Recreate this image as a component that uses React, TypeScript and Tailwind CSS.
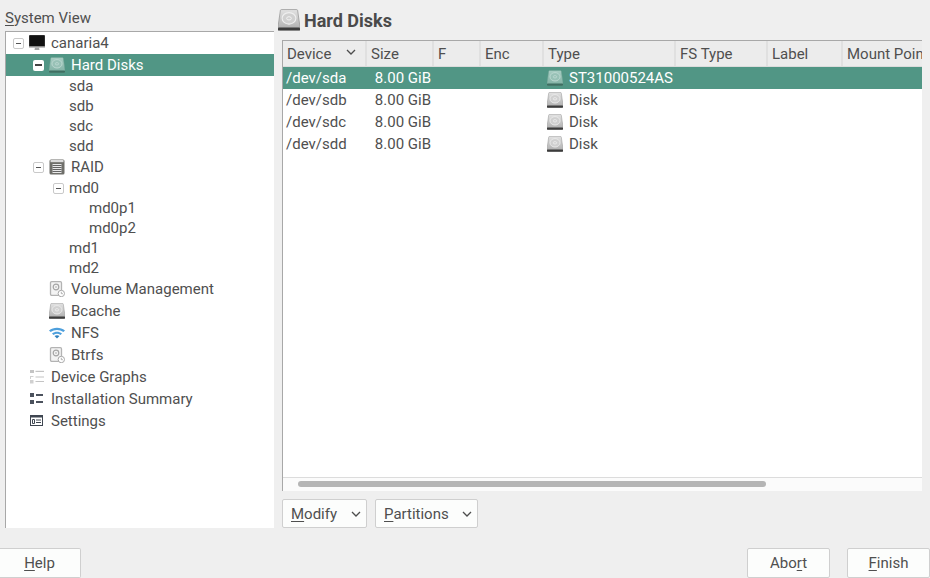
import type { ReactNode } from 'react'

const HddIcon = ({ size = 16, selected = false }: { size?: number; selected?: boolean }) => (
    <svg width={size} height={size} viewBox="0 0 16 16" className="shrink-0">
        <defs>
            <linearGradient id={selected ? 'hddSel' : 'hdd'} x1="0" y1="0" x2="0" y2="1">
                <stop offset="0" stopColor={selected ? '#a9cdc3' : '#e2e2e2'} />
                <stop offset="1" stopColor={selected ? '#80b1a4' : '#adadad'} />
            </linearGradient>
        </defs>
        <path d="M2.600 .4h10.800q.8 0 .9.8L16 13v2.200H0V13L1.700 1.200q.1-.8.9-.8z" fill={`url(#${selected ? 'hddSel' : 'hdd'})`} stroke={selected ? '#6ea193' : '#8f8f8f'} strokeWidth=".5" />
        <ellipse cx="8" cy="6.800" rx="5" ry="4.200" fill={selected ? '#98c1b6' : '#d0d0d0'} stroke={selected ? '#c3dcd5' : '#efefef'} strokeWidth=".8" />
        <ellipse cx="8" cy="6.800" rx="1.700" ry="1.200" fill="none" stroke={selected ? '#c3dcd5' : '#f2f2f2'} strokeWidth=".7" />
        <rect x="0" y="13.400" width="16" height="2.300" rx=".7" fill={selected ? '#3f6f62' : '#3c3c3c'} />
    </svg>
)

const MonitorIcon = () => (
    <svg width="16" height="16" viewBox="0 0 16 16" className="shrink-0">
        <rect x="0" y="0" width="16" height="12" rx="1" fill="#2a2a2a" />
        <rect x="1" y="1" width="14" height="10" fill="#111" />
        <rect x="0" y="11" width="16" height="1.500" fill="#8a8a8a" />
        <path d="M6 12.500h4l.5 2.500h-5z" fill="#a5a5a5" />
    </svg>
)

const RaidIcon = () => (
    <svg width="16" height="16" viewBox="0 0 16 16" className="shrink-0">
        <rect x="0.500" y="0.500" width="15" height="15" rx="1.500" fill="#6f6f6a" />
        <rect x="1.500" y="1" width="13" height="2.200" fill="#dcdcdc" />
        <rect x="3.500" y="5" width="9" height="9" fill="#e9e9e9" />
        <path d="M3.500 6.500h9M3.500 8.500h9M3.500 10.500h9M3.500 12.500h9" stroke="#555" strokeWidth=".9" />
    </svg>
)

const VolumeIcon = () => (
    <svg width="16" height="16" viewBox="0 0 16 16" className="shrink-0">
        <rect x="1.500" y="0.700" width="11" height="13.600" rx="1.200" fill="#f4f4f4" stroke="#b3b3b3" strokeWidth="1.300" />
        <circle cx="7" cy="6" r="2.800" fill="none" stroke="#a5a5a5" strokeWidth="1.200" />
        <circle cx="7" cy="6" r=".8" fill="#a5a5a5" />
        <circle cx="12.300" cy="12.500" r="3.200" fill="#fff" stroke="#a8a8a8" strokeWidth="1" />
        <path d="M12.300 10.800v1.900h1.600" fill="none" stroke="#a8a8a8" strokeWidth=".9" />
    </svg>
)

const WifiIcon = () => (
    <svg width="16" height="16" viewBox="0 0 16 16" className="shrink-0">
        <path d="M0 5.600C4.500 1.900 11.500 1.900 16 5.600l-1.600 1.500C10.600 4.200 5.400 4.200 1.600 7.100z" fill="#4d9fdc" />
        <path d="M3 8.500c3-2.300 7-2.300 10 0l-1.500 1.400c-2.200-1.600-4.800-1.600-7 0z" fill="#4d9fdc" />
        <path d="M5.500 11c1.600-1.100 3.400-1.100 5 0L8 13.500z" fill="#2f80bd" />
    </svg>
)

const GraphsIcon = () => (
    <svg width="16" height="16" viewBox="0 0 16 16" className="shrink-0" fill="#c4c4c4">
        <rect x="1" y="1" width="4" height="3" />
        <rect x="6.500" y="1.800" width="8.500" height="1.200" />
        <path d="M1 7h3.500v1H2v2H1zM1 11h3.500v3.500H1z" opacity=".8" />
        <rect x="6.500" y="7.500" width="8.500" height="1" />
        <rect x="6.500" y="12" width="8.500" height="1" />
    </svg>
)

const SummaryIcon = () => (
    <svg width="16" height="16" viewBox="0 0 16 16" className="shrink-0" fill="#4b525d">
        <rect x="1" y="2" width="4" height="4" />
        <rect x="1" y="9" width="4" height="4" />
        <rect x="7" y="3" width="7" height="2" />
        <rect x="7" y="10" width="7" height="2" />
    </svg>
)

const SettingsIcon = () => (
    <svg width="16" height="16" viewBox="0 0 16 16" className="shrink-0">
        <rect x="1.500" y="2.500" width="12" height="10" fill="#fff" stroke="#3f4651" />
        <rect x="1" y="2" width="13" height="2.500" fill="#3f4651" />
        <path d="M3.500 6.500h2v4h-2zM7 7h5M7 9.500h5" fill="none" stroke="#3f4651" />
    </svg>
)

const Toggle = ({ selected = false }: { selected?: boolean }) => (
    <span
        className={
            selected
                ? 'w-[11px] h-[11px] shrink-0 rounded-[2px] bg-white flex items-center justify-center'
                : 'w-[11px] h-[11px] shrink-0 rounded-[2px] bg-white border border-[#c9c9c9] flex items-center justify-center'
        }
    >
        <span className={selected ? 'w-[7px] h-[2px] bg-[#444]' : 'w-[5px] h-px bg-[#555]'}></span>
    </span>
)

type Node = {
    label: string
    ml: string
    toggle?: boolean
    icon?: 'hdd' | 'hddsel' | 'monitor' | 'raid' | 'volume' | 'wifi' | 'graphs' | 'summary' | 'settings'
}

const tree: Node[] = [
    { label: 'canaria4', ml: 'pl-[7px]', toggle: true, icon: 'monitor' },
    { label: 'Hard Disks', ml: 'pl-[27px]', toggle: true, icon: 'hddsel' },
    { label: 'sda', ml: 'pl-[63px]' },
    { label: 'sdb', ml: 'pl-[63px]' },
    { label: 'sdc', ml: 'pl-[63px]' },
    { label: 'sdd', ml: 'pl-[63px]' },
    { label: 'RAID', ml: 'pl-[27px]', toggle: true, icon: 'raid' },
    { label: 'md0', ml: 'pl-[47px]', toggle: true },
    { label: 'md0p1', ml: 'pl-[83px]' },
    { label: 'md0p2', ml: 'pl-[83px]' },
    { label: 'md1', ml: 'pl-[63px]' },
    { label: 'md2', ml: 'pl-[63px]' },
    { label: 'Volume Management', ml: 'pl-[43px]', icon: 'volume' },
    { label: 'Bcache', ml: 'pl-[43px]', icon: 'hdd' },
    { label: 'NFS', ml: 'pl-[43px]', icon: 'wifi' },
    { label: 'Btrfs', ml: 'pl-[43px]', icon: 'volume' },
    { label: 'Device Graphs', ml: 'pl-[23px]', icon: 'graphs' },
    { label: 'Installation Summary', ml: 'pl-[23px]', icon: 'summary' },
    { label: 'Settings', ml: 'pl-[23px]', icon: 'settings' },
]

const iconFor = (name: Node['icon']): ReactNode => {
    switch (name) {
        case 'hdd':
            return <HddIcon />
        case 'hddsel':
            return <HddIcon selected />
        case 'monitor':
            return <MonitorIcon />
        case 'raid':
            return <RaidIcon />
        case 'volume':
            return <VolumeIcon />
        case 'wifi':
            return <WifiIcon />
        case 'graphs':
            return <GraphsIcon />
        case 'summary':
            return <SummaryIcon />
        case 'settings':
            return <SettingsIcon />
        default:
            return null
    }
}

const TreeRow = ({ node }: { node: Node }) => {
    const selected = node.icon === 'hddsel'
    const height = node.icon ? 'h-[22px]' : 'h-[20px]'
    return (
        <div className={`${height} ${node.ml} flex items-center ${selected ? 'bg-[#519685] text-white' : ''}`}>
            {node.toggle && <Toggle selected={selected} />}
            {node.toggle && <span className="w-[5px] shrink-0"></span>}
            {iconFor(node.icon)}
            {node.icon && <span className="w-[6px] shrink-0"></span>}
            <span className="whitespace-nowrap pt-px">{node.label}</span>
        </div>
    )
}

const columns = 'grid grid-cols-[84px_67px_47px_63px_132px_92px_75px_79px]'
const headers = ['Device', 'Size', 'F', 'Enc', 'Type', 'FS Type', 'Label', 'Mount Point']
const disks = [
    { dev: '/dev/sda', type: 'ST31000524AS' },
    { dev: '/dev/sdb', type: 'Disk' },
    { dev: '/dev/sdc', type: 'Disk' },
    { dev: '/dev/sdd', type: 'Disk' },
]

const Chevron = () => (
    <svg width="10" height="6" viewBox="0 0 10 6" className="shrink-0">
        <path d="M1 1l4 4 4-4" fill="none" stroke="#4d4d4d" strokeWidth="1.300" />
    </svg>
)

const Dropdown = ({ first, rest, width }: { first: string; rest: string; width: string }) => (
    <button type="button" className={`${width} h-[29px] pl-[8px] pr-[5px] flex items-center justify-between bg-[#fcfdfc] border border-[#cfcfcf] rounded-[2px]`}>
        <span className="pt-px">
            <span className="underline underline-offset-2">{first}</span>
            {rest}
        </span>
        <Chevron />
    </button>
)

export default function App() {
    return (
        <main className="h-[578px] w-[930px] overflow-hidden flex flex-col bg-[#efefef] text-[#4f4f4f] text-[15px] font-['Roboto',sans-serif]">
            <div className="h-[528px] flex shrink-0">
                <section className="ml-[5px] w-[269px] flex flex-col">
                    <div className="h-[31px] pt-[8px] leading-[20px]">
                        <span className="underline underline-offset-2">S</span>ystem View
                    </div>
                    <div className="flex-1 bg-white border-t border-l border-[#a8a8a8]">
                        {tree.map((node) => (
                            <TreeRow key={node.label} node={node} />
                        ))}
                    </div>
                </section>
                <section className="ml-[8px] w-[640px] flex flex-col">
                    <div className="h-[40px] -ml-[4px] pt-[9px] flex items-start gap-[4px]">
                        <HddIcon size={22} />
                        <h1 className="text-[18px] leading-[24px] font-bold text-[#4a4a4a]">Hard Disks</h1>
                    </div>
                    <div className="h-[451px] flex flex-col bg-white border-t border-l border-[#a8a8a8]">
                        <div className={`${columns} h-[26px] shrink-0 bg-[#ececec] border-b border-[#dcdcdc] overflow-hidden`}>
                            {headers.map((title, i) => (
                                <div key={title} className={`px-[4px] pt-px flex items-center justify-between whitespace-nowrap overflow-hidden ${i < 7 ? 'border-r-2 border-[#e0e0e0]' : ''}`}>
                                    {title}
                                    {i === 0 && (
                                        <span className="mr-[5px] mb-[4px]">
                                            <Chevron />
                                        </span>
                                    )}
                                </div>
                            ))}
                        </div>
                        <div className="flex-1">
                            {disks.map((disk, i) => (
                                <div key={disk.dev} className={`${columns} h-[22px] items-center ${i === 0 ? 'bg-[#519685] text-white' : ''}`}>
                                    <div className="pl-[3px]">{disk.dev}</div>
                                    <div className="text-right pr-[3px]">8.00 GiB</div>
                                    <div></div>
                                    <div></div>
                                    <div className="pl-[3px] flex items-center gap-[6px] whitespace-nowrap">
                                        <HddIcon selected={i === 0} />
                                        <span>{disk.type}</span>
                                    </div>
                                </div>
                            ))}
                        </div>
                        <div className="h-[14px] shrink-0 pt-[3px] bg-[#fbfbfb] border-t border-[#dcdcdc]">
                            <div className="ml-[15px] w-[468px] h-[6px] rounded-full bg-[#b5b5b5]"></div>
                        </div>
                    </div>
                    <div className="mt-[8px] flex gap-[8px]">
                        <Dropdown first="M" rest="odify" width="w-[85px]" />
                        <Dropdown first="P" rest="artitions" width="w-[103px]" />
                    </div>
                </section>
            </div>
            <footer className="mt-[20px] h-[30px] flex">
                <button type="button" className="w-[81px] h-[30px] pt-px pr-px bg-[#fcfdfc] border border-l-0 border-[#cfcfcf] rounded-r-[2px]">
                    <span className="underline underline-offset-2">H</span>elp
                </button>
                <button type="button" className="ml-auto w-[83px] h-[30px] pt-px bg-[#fcfdfc] border border-[#cfcfcf] rounded-[2px]">
                    Abo<span className="underline underline-offset-2">r</span>t
                </button>
                <button type="button" className="ml-[17px] w-[83px] h-[30px] pt-px bg-[#fcfdfc] border border-[#cfcfcf] rounded-[2px]">
                    <span className="underline underline-offset-2">F</span>inish
                </button>
            </footer>
        </main>
    )
}
